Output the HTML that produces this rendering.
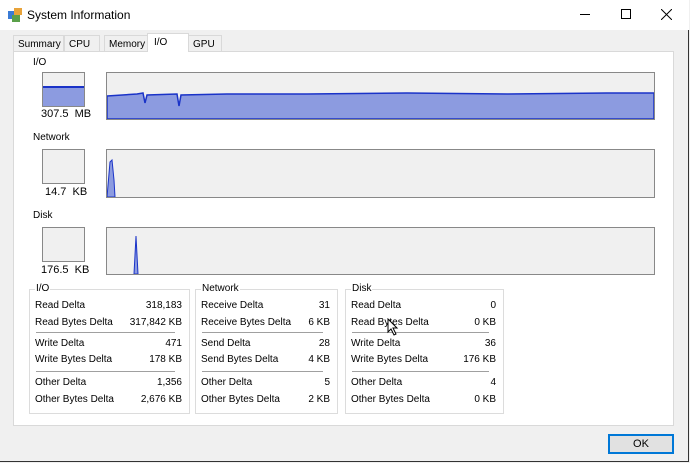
<!DOCTYPE html>
<html><head><style>
*{margin:0;padding:0;box-sizing:border-box}
body{width:690px;height:463px;background:#f0f0f0;font-family:"Liberation Sans",sans-serif;font-size:10px;color:#000;position:relative;overflow:hidden}
.a{position:absolute;white-space:nowrap}
.win{position:absolute;left:0;top:0;width:689px;height:462px;border-right:1px solid #333;border-bottom:1px solid #333}
.title{position:absolute;left:0;top:0;width:689px;height:30px;background:#fff}
.tab{position:absolute;top:35px;height:17px;border:1px solid #d9d9d9;border-bottom:none;background:#f0f0f0;padding:3px 0 0 4px;font-size:10px}
.panel{position:absolute;left:13px;top:51px;width:661px;height:375px;background:#fff;border:1px solid #d9d9d9}
.box{position:absolute;border:1px solid #888;background:#f0f0f0}
.gb{position:absolute;border:1px solid #dcdcdc}
.gb .lbl{position:absolute;top:-7px;left:5px;background:#fff;padding:0 1px}
.row{position:absolute;left:5px;right:7px}
.row span{position:absolute;right:0}
.sep{position:absolute;left:6px;right:14px;height:0;border-top:1px solid #a0a0a0;border-bottom:1px solid #fff}
</style></head><body>
<div class="win"></div>
<div class="title"></div>
<svg class="a" style="left:7px;top:7px" width="16" height="16"><rect x="1" y="4" width="9" height="8" fill="#3a7bd5"/><rect x="7" y="1" width="8" height="7" fill="#e8a33a"/><rect x="5" y="8" width="8" height="7" fill="#5aa04a"/></svg>
<div class="a" style="left:27px;top:8px;font-size:12px">System Information</div>
<div class="a" style="left:580px;top:14px;width:10px;height:1px;background:#000"></div>
<div class="a" style="left:621px;top:9px;width:10px;height:10px;border:1px solid #000"></div>
<svg class="a" style="left:661px;top:9px" width="11" height="11"><path d="M0 0L11 11M11 0L0 11" stroke="#000" stroke-width="1"/></svg>

<div class="tab" style="left:13px;width:51px">Summary</div>
<div class="tab" style="left:64px;width:36px">CPU</div>
<div class="tab" style="left:104px;width:44px">Memory</div>
<div class="tab" style="left:188px;width:34px">GPU</div>
<div class="panel"></div>
<div class="tab" style="left:147px;top:33px;height:19px;width:42px;background:#fff;padding-left:6px">I/O</div>

<div class="a" style="left:33px;top:57px">I/O</div>
<div class="box" style="left:42px;top:72px;width:43px;height:35px"><div style="position:absolute;left:0;right:0;top:13px;bottom:0;background:#8c9be0;border-top:2px solid #1a33c8"></div></div>
<div class="a" style="left:41px;top:108px;font-size:11px">307.5&nbsp; MB</div>
<div class="box" style="left:106px;top:72px;width:549px;height:48px;overflow:hidden">
<svg width="547" height="46" style="position:absolute;left:0;top:0"><path d="M0 23 L30 21 L36 20 L38 30 L40 22 L70 21 L72 33 L74 22 L120 21 L200 21 L300 20 L400 21 L500 20 L547 20 L547 46 L0 46Z" fill="#8c9be0" stroke="#1a33c8" stroke-width="1.5"/></svg></div>

<div class="a" style="left:33px;top:132px">Network</div>
<div class="box" style="left:42px;top:149px;width:43px;height:35px"></div>
<div class="a" style="left:45px;top:186px;font-size:11px">14.7&nbsp; KB</div>
<div class="box" style="left:106px;top:149px;width:549px;height:49px;overflow:hidden">
<svg width="10" height="47" style="position:absolute;left:0;top:0"><path d="M0 47 L3 12 L5 10 L7 30 L8 47Z" fill="#8c9be0" stroke="#1a33c8" stroke-width="1"/></svg></div>

<div class="a" style="left:33px;top:210px">Disk</div>
<div class="box" style="left:42px;top:227px;width:43px;height:35px"></div>
<div class="a" style="left:41px;top:264px;font-size:11px">176.5&nbsp; KB</div>
<div class="box" style="left:106px;top:227px;width:549px;height:48px;overflow:hidden">
<svg width="40" height="46" style="position:absolute;left:0;top:0"><path d="M27 46 L29 8 L31 46Z" fill="#8c9be0" stroke="#1a33c8" stroke-width="1"/></svg></div>

<div class="gb" style="left:29px;top:289px;width:161px;height:125px"><div class="lbl">I/O</div>
<div class="row" style="top:10px">Read Delta<span>318,183</span></div>
<div class="row" style="top:27px">Read Bytes Delta<span>317,842 KB</span></div>
<div class="sep" style="top:42px"></div>
<div class="row" style="top:48px">Write Delta<span>471</span></div>
<div class="row" style="top:64px">Write Bytes Delta<span>178 KB</span></div>
<div class="sep" style="top:81px"></div>
<div class="row" style="top:87px">Other Delta<span>1,356</span></div>
<div class="row" style="top:104px">Other Bytes Delta<span>2,676 KB</span></div></div>

<div class="gb" style="left:195px;top:289px;width:143px;height:125px"><div class="lbl">Network</div>
<div class="row" style="top:10px">Receive Delta<span>31</span></div>
<div class="row" style="top:27px">Receive Bytes Delta<span>6 KB</span></div>
<div class="sep" style="top:42px"></div>
<div class="row" style="top:48px">Send Delta<span>28</span></div>
<div class="row" style="top:64px">Send Bytes Delta<span>4 KB</span></div>
<div class="sep" style="top:81px"></div>
<div class="row" style="top:87px">Other Delta<span>5</span></div>
<div class="row" style="top:104px">Other Bytes Delta<span>2 KB</span></div></div>

<div class="gb" style="left:345px;top:289px;width:159px;height:125px"><div class="lbl">Disk</div>
<div class="row" style="top:10px">Read Delta<span>0</span></div>
<div class="row" style="top:27px">Read Bytes Delta<span>0 KB</span></div>
<div class="sep" style="top:42px"></div>
<div class="row" style="top:48px">Write Delta<span>36</span></div>
<div class="row" style="top:64px">Write Bytes Delta<span>176 KB</span></div>
<div class="sep" style="top:81px"></div>
<div class="row" style="top:87px">Other Delta<span>4</span></div>
<div class="row" style="top:104px">Other Bytes Delta<span>0 KB</span></div></div>

<svg class="a" style="left:387px;top:318px" width="12" height="18"><path d="M1 1L1 14L4 11L7 17L9 16L6 10L10 10Z" fill="#fff" stroke="#000" stroke-width="1"/></svg>

<div class="a" style="left:608px;top:434px;width:66px;height:20px;border:2px solid #0078d7;background:#e1e1e1;text-align:center;line-height:16px;font-size:11px">OK</div>
</body></html>
